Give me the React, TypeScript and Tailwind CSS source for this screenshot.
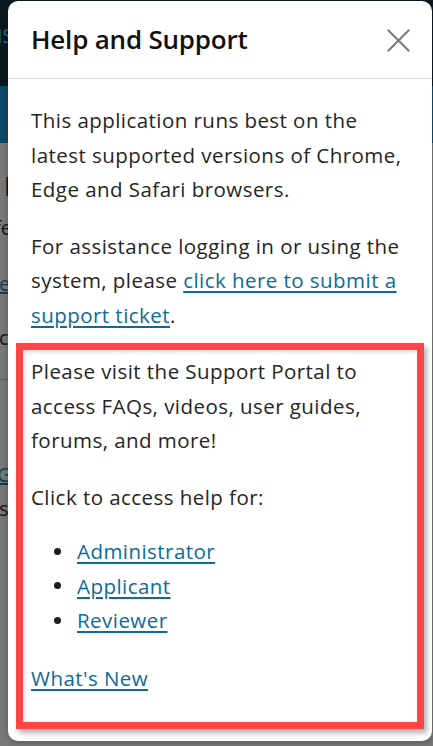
const LINK = "text-[#0b6b99] underline decoration-[1.5px] underline-offset-[3px]";

const ROLES = ["Administrator", "Applicant", "Reviewer"];

function BackgroundPage() {
  // dimmed page peeking out behind the modal on the left edge
  return (
    <div className="flex flex-col">
      <div className="h-[86px] bg-[#0c1820] pt-[24px]">
        <span className="-ml-[3px] text-[20px] leading-[24px] text-[#1d6a92]">IS</span>
      </div>
      <div className="h-[57px] bg-[#0e4968]" />
      <div className="flex flex-col text-[20px] text-[#161616]">
        <span className="mt-[28px] ml-[4px] text-[26px] font-bold leading-[30px] text-[#22170a]">IRB</span>
        <span className="mt-[14px] -ml-[6px] leading-[26px]">fe</span>
        <span className="mt-[30px] -ml-[1px] leading-[26px] text-[#0a3d57] underline">ev</span>
        <span className="mt-[28px] -ml-[1px] leading-[26px]">co</span>
        <div className="mt-[28px] h-px w-[20px] bg-[#5c5c5c]" />
        <span className="mt-[82px] -ml-[3px] leading-[26px] text-[#0a3d57] underline">Go</span>
        <span className="mt-[8px] -ml-[1px] leading-[26px]">se</span>
      </div>
    </div>
  );
}

export default function App() {
  return (
    <div
      className="relative h-[746px] w-[433px] overflow-hidden bg-[#787878]"
      style={{ fontFamily: '"Open Sans", "Noto Sans", sans-serif' }}
    >
      <BackgroundPage />

      <div className="absolute left-[8px] top-[1px] flex h-[740px] w-[424px] flex-col rounded-[10px] bg-white shadow-[0_2px_6px_rgba(0,0,0,0.25)]">
        <header className="flex h-[78px] items-center justify-between border-b border-[#dcdcdc] pl-[23px] pr-[22px]">
          <h2 className="text-[26px] font-semibold tracking-[-0.2px] text-[#111]">Help and Support</h2>
          <button className="mt-[1px]">
            <svg width="23" height="23" viewBox="0 0 23 23" stroke="#7a7a7a" strokeWidth="2" strokeLinecap="square">
              <line x1="1.5" y1="1.5" x2="21.5" y2="21.5" />
              <line x1="21.5" y1="1.5" x2="1.5" y2="21.5" />
            </svg>
          </button>
        </header>

        <div className="flex flex-col whitespace-nowrap px-[23px] pt-[24px] text-[20.5px] leading-[34.5px] tracking-[0.45px] text-[#252525]">
          <p className="mb-[22px]">
            This application runs best on the
            <br />
            latest supported versions of Chrome,
            <br />
            Edge and Safari browsers.
          </p>
          <p>
            For assistance logging in or using the
            <br />
            system, please <a className={LINK}>click here to submit a</a>
            <br />
            <a className={LINK}>support ticket</a>.
          </p>

          <div className="-mx-[15px] mt-[11px] border-[7px] border-[#ff4545] px-[8px] pb-[27px] pt-[4px] shadow-[3px_4px_5px_rgba(0,0,0,0.3),inset_2px_2px_4px_rgba(0,0,0,0.15)]">
            <p className="mb-[22px]">
              Please visit the Support Portal to
              <br />
              access FAQs, videos, user guides,
              <br />
              forums, and more!
            </p>
            <p className="mb-[20px]">Click to access help for:</p>
            <ul className="mb-[23px] flex flex-col">
              {ROLES.map((role) => (
                <li key={role} className="flex items-center">
                  <span className="ml-[23px] mr-[16px] h-[7px] w-[7px] rounded-full bg-[#1e1e1e]" />
                  <a className={LINK}>{role}</a>
                </li>
              ))}
            </ul>
            <a className={LINK}>What's New</a>
          </div>
        </div>
      </div>
    </div>
  );
}
